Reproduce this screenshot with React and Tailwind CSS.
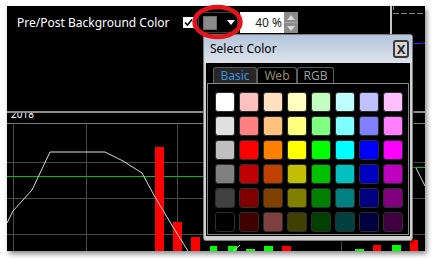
import React from 'react'

// basic palette shown in the picker
const SWATCHES = [
  ['#ffffff', '#ffc0c0', '#ffe0c0', '#ffffc0', '#c0ffc0', '#c0ffff', '#c0c0ff', '#ffc0ff'],
  ['#e0e0e0', '#ff8080', '#ffc080', '#ffff80', '#80ff80', '#80ffff', '#8080ff', '#ff80ff'],
  ['#c0c0c0', '#ff0000', '#ff8000', '#ffff00', '#00ff00', '#00ffff', '#0000ff', '#ff00ff'],
  ['#808080', '#c00000', '#c04000', '#c0c000', '#00c000', '#00c0c0', '#0000c0', '#c000c0'],
  ['#404040', '#800000', '#804000', '#808000', '#008000', '#008080', '#000080', '#800080'],
  ['#000000', '#400000', '#804040', '#404000', '#004000', '#004040', '#000040', '#400040'],
]

const BottomChart = () => (
  <svg width="418" height="138" className="block">
    <text x="4" y="5" fill="#ffffff" fontSize="10" fontFamily="Noto Sans, sans-serif">2018</text>
    {/* grid */}
    <line x1="0" y1="10.5" x2="418" y2="10.5" stroke="#7a7a7a" />
    <line x1="0" y1="49.5" x2="418" y2="49.5" stroke="#4a4a4a" />
    <line x1="0" y1="85.5" x2="418" y2="85.5" stroke="#4a4a4a" />
    <line x1="0" y1="121.5" x2="418" y2="121.5" stroke="#4a4a4a" />
    <line x1="6.5" y1="10" x2="6.5" y2="138" stroke="#4a4a4a" />
    <line x1="79.5" y1="10" x2="79.5" y2="138" stroke="#4a4a4a" />
    <line x1="170.5" y1="10" x2="170.5" y2="138" stroke="#4a4a4a" />
    <line x1="334.5" y1="10" x2="334.5" y2="138" stroke="#4a4a4a" />
    {/* level line */}
    <line x1="0" y1="63.5" x2="400" y2="63.5" stroke="#00c000" />
    <line x1="405" y1="54.5" x2="418" y2="54.5" stroke="#00c000" />
    {/* bars */}
    <rect x="148" y="34" width="9" height="104" fill="#ff0000" />
    <rect x="166" y="109" width="9" height="29" fill="#ff0000" />
    <rect x="184" y="124" width="9" height="14" fill="#ff0000" />
    <rect x="203" y="133" width="7" height="5" fill="#00ff00" />
    <rect x="221" y="133" width="9" height="5" fill="#00ff00" />
    <rect x="239" y="136" width="9" height="2" fill="#00ff00" />
    <rect x="257" y="133" width="9" height="5" fill="#00ff00" />
    <rect x="275" y="133" width="9" height="5" fill="#ff0000" />
    <rect x="348" y="136" width="9" height="2" fill="#00ff00" />
    <rect x="366" y="132" width="8" height="6" fill="#ff0000" />
    <rect x="385" y="132" width="9" height="6" fill="#00ff00" />
    <rect x="403" y="127" width="8" height="11" fill="#ff0000" />
    {/* price line */}
    <polyline
      points="0,110 6,98 25,77 43,39 98,39 116,48 135,60 148,84 166,114 181,138"
      fill="none"
      stroke="#d8d8d8"
      strokeWidth="1"
    />
    <line x1="226" y1="138" x2="233" y2="132" stroke="#d8d8d8" />
    <line x1="409" y1="55" x2="418" y2="73" stroke="#d8d8d8" />
  </svg>
)

const Spinner = () => (
  <div className="w-[14px] h-[21px] flex flex-col bg-[#8c8c8c]">
    <div className="flex-1 flex items-center justify-center border-b border-[#a8a8a8]">
      <svg width="8" height="5"><polygon points="0,5 4,0 8,5" fill="#d8d8d8" /></svg>
    </div>
    <div className="flex-1 flex items-center justify-center">
      <svg width="8" height="5"><polygon points="0,0 4,5 8,0" fill="#d8d8d8" /></svg>
    </div>
  </div>
)

const ColorDialog = () => (
  <div className="absolute left-[203px] top-[34px] w-[210px] h-[207px] rounded-[3px] border border-[#7c7c7c] bg-[#d2d2d2] flex flex-col shadow-[1px_2px_3px_rgba(0,0,0,0.5)]">
    <div className="h-[28px] flex items-center justify-between pl-[6px] pr-[3px] bg-gradient-to-b from-[#b3c4da] to-[#dde4ec]">
      <span className="text-[12px] text-black">Select Color</span>
      <div className="w-[16px] h-[18px] rounded-[3px] border-2 border-[#3c3c3c] bg-[#d6d6d6] flex items-center justify-center text-[13px] font-bold leading-none text-[#2a2a2a]">
        X
      </div>
    </div>
    <div className="mx-[2px] h-[173px] bg-black pt-[4px] flex flex-col">
      <div className="flex items-end pl-[7px] h-[16px]">
        <div className="w-[44px] h-[16px] rounded-t-[3px] border border-b-0 border-[#5c5c5c] bg-[#262626] text-[12px] leading-[15px] text-[#3d8fdb] text-center">Basic</div>
        <div className="w-[40px] h-[16px] rounded-t-[3px] border border-b-0 border-[#5c5c5c] text-[12px] leading-[15px] text-[#9a8866] text-center">Web</div>
        <div className="w-[37px] h-[16px] rounded-t-[3px] border border-b-0 border-[#5c5c5c] text-[12px] leading-[15px] text-[#9a9a9a] text-center">RGB</div>
      </div>
      <div className="ml-[1px] w-[202px] h-[152px] border border-[#8a8a8a] pl-[7px] pt-[8px] grid grid-cols-[repeat(8,20px)] auto-rows-[20px] gap-[4px]">
        {SWATCHES.flat().map((c, i) => (
          <div
            key={i}
            className="rounded-[3px] border border-[#2e2e2e]"
            style={{ backgroundColor: c }}
          />
        ))}
      </div>
    </div>
  </div>
)

export default function App() {
  return (
    <div className="relative w-[432px] h-[259px] bg-white overflow-hidden pl-[7px] pt-[6px] font-['Noto_Sans',sans-serif]">
      <div className="w-[418px] h-[245px] bg-black flex flex-col shadow-[2px_3px_5px_rgba(0,0,0,0.45)]">
        <div className="h-[105px] flex">
          <div className="w-[383px] pt-[6px] pl-[10px]">
            <div className="h-[21px] flex items-center">
              <span className="w-[166px] text-[12px] text-white">Pre/Post Background Color</span>
              <div className="w-[11px] h-[11px] bg-white flex items-center justify-center">
                <svg width="9" height="9" viewBox="0 0 9 9">
                  <polyline points="1,4.5 3.5,7 8,1.5" fill="none" stroke="#000" strokeWidth="1.6" />
                </svg>
              </div>
              <div className="ml-[4px] w-[40px] h-[21px] border border-[#3a3a3a] flex items-center pl-[4px]">
                <div className="w-[14px] h-[14px] bg-[#8a8a8a] border border-[#6a6a6a]" />
                <svg width="8" height="5" className="ml-[10px]"><polygon points="0,0 4,5 8,0" fill="#ffffff" /></svg>
              </div>
              <div className="ml-[2px] w-[44px] h-[21px] bg-white text-[12px] text-[#222] text-right pr-[2px] leading-[21px]">40 %</div>
              <Spinner />
            </div>
          </div>
          <div className="w-[2px] bg-[#c4c4c4]" />
          <svg width="33" height="105" className="block">
            <line x1="1" y1="7.5" x2="33" y2="7.5" stroke="#8a8a8a" strokeDasharray="6 2" />
            <line x1="1.5" y1="0" x2="1.5" y2="4" stroke="#8a8a8a" />
            <line x1="0" y1="39" x2="33" y2="37" stroke="#1f3cff" />
          </svg>
        </div>
        <div className="h-[2px] bg-[#8e8e8e]" />
        <BottomChart />
      </div>

      <ColorDialog />

      {/* red annotation ring */}
      <svg width="432" height="259" className="absolute left-0 top-0 pointer-events-none">
        <ellipse cx="217.5" cy="22" rx="23" ry="15" fill="none" stroke="#e3141c" strokeWidth="4.5" />
      </svg>
    </div>
  )
}
